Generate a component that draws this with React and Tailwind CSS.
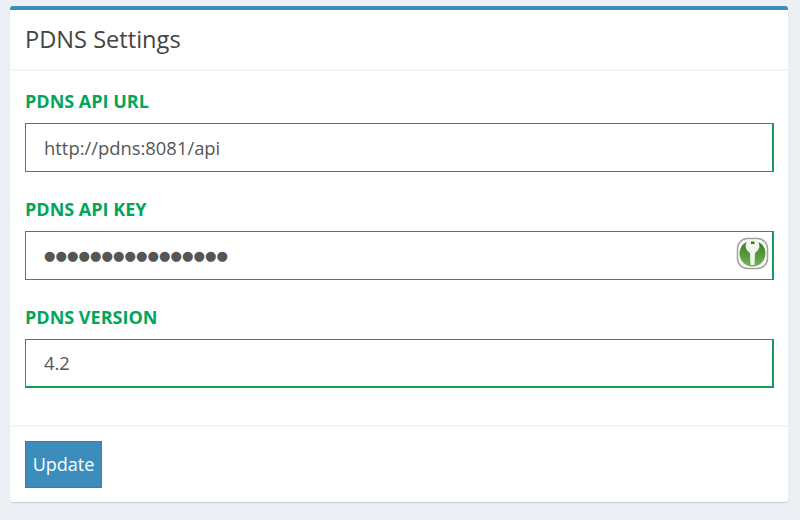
const font = { fontFamily: '"Open Sans", sans-serif' };

function KeyIcon() {
  return (
    <svg width="34" height="34" viewBox="0 0 34 34" className="absolute right-[5px] top-[6px]">
      <defs>
        <linearGradient id="keyGreen" x1="0" y1="0" x2="0" y2="1">
          <stop offset="0" stopColor="#2f7d1a" />
          <stop offset="1" stopColor="#79b058" />
        </linearGradient>
      </defs>
      <rect x="2.5" y="1.5" width="30" height="30" rx="10" fill="#fff" stroke="#a0a0a0" strokeWidth="1.5" />
      <circle cx="17.5" cy="16.5" r="13" fill="url(#keyGreen)" />
      <path d="M12 3h11l1.500 6c0 3-2 5-4.500 7l-.5 12h-4L15 16c-2.500-2-4.500-4-4.500-7z" fill="#f2f6ee" />
      <rect x="16" y="4.500" width="3.500" height="2.500" fill="#2f7d1a" />
    </svg>
  );
}

function Field({ label, value, dots, icon, thick }) {
  return (
    <div className="mb-[27px]">
      <label className="block h-[32px] text-[18px] leading-[20px] font-bold text-[#00a65a]">{label}</label>
      <div className="relative">
        {dots ? (
          <div
            style={{ fontFamily: '"DejaVu Sans", sans-serif' }}
            className="h-[49px] border border-r-2 border-[#169a5e] pl-[18px] flex items-center text-[13.2px] text-[#555]"
          >
            {value}
          </div>
        ) : (
          <div className={`h-[49px] border border-r-2 border-[#169a5e] pl-[18px] flex items-center text-[18.4px] text-[#555] ${thick ? 'border-b-2' : ''}`}>
            {value}
          </div>
        )}
        {icon && <KeyIcon />}
      </div>
    </div>
  );
}

export default function App() {
  return (
    <div style={font} className="h-[520px] w-[800px] overflow-hidden bg-[#ecf0f5] pl-[10px] pr-[12px] pt-[6px]">
      <div className="h-[496px] rounded-[3px] border-t-4 border-[#3c8dbc] bg-white shadow-[0_1px_1px_rgba(0,0,0,0.15)] flex flex-col">
        <div className="h-[61px] border-b-2 border-[#f4f4f4] pl-[15px] flex items-center">
          <h3 className="text-[23.6px] leading-none text-[#444]">PDNS Settings</h3>
        </div>
        <div className="h-[354px] pl-[15px] pr-[14px] pt-[20px]">
          <Field label="PDNS API URL" value="http://pdns:8081/api" />
          <Field label="PDNS API KEY" value="●●●●●●●●●●●●●●●●" dots icon />
          <Field label="PDNS VERSION" value="4.2" thick />
        </div>
        <div className="border-t-2 border-[#f4f4f4] px-[15px] pt-[14px]">
          <button className="h-[47px] w-[77px] border border-[#367fa9] bg-[#3c8dbc] text-[18px] text-white">Update</button>
        </div>
      </div>
    </div>
  );
}
